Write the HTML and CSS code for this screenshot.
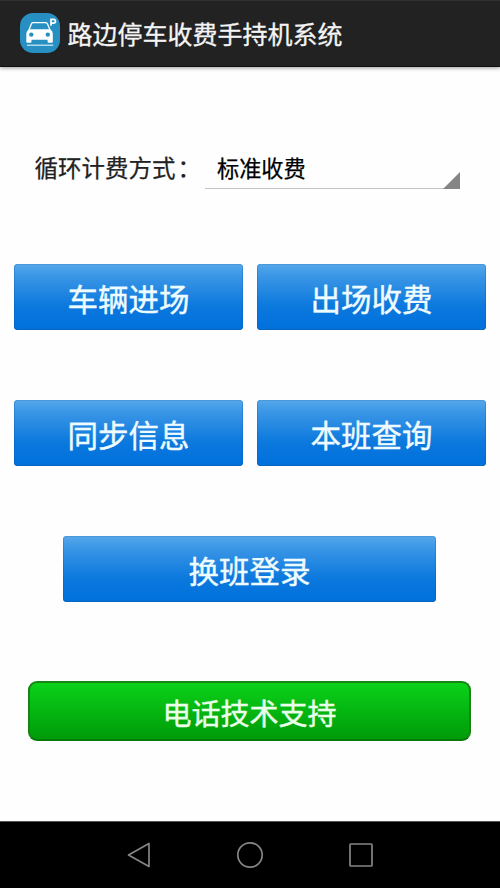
FILE: index.html
```html
<!DOCTYPE html>
<html lang="zh-CN">
<head>
<meta charset="utf-8">
<title>路边停车收费手持机系统</title>
<link rel="stylesheet" href="styles.css">
</head>
<body>
<header class="app-bar">
  <svg class="logo" viewBox="0 0 40 40" aria-hidden="true">
    <rect width="40" height="40" rx="13" fill="#278fc2"/>
    <path d="M9 17l2.400-6.300Q12 9.600 13.300 9.600h12.200q1.300 0 1.900 1.100L30 17" fill="none" stroke="#fff" stroke-width="1.300"/>
    <path fill="#fff" fill-rule="evenodd" d="M9 16.300h21.200q2.600 1.500 2.600 4.500v8q0 1-1 1h-3.200q-1 0-1-1v-2H11.500v2q0 1-1 1H7.300q-1 0-1-1v-8q0-3 2.700-4.500zM11.300 19.400a2.200 2.200 0 1 0 0 4.400 2.200 2.200 0 0 0 0-4.400zM27.800 19.400a2.200 2.200 0 1 0 0 4.400 2.200 2.200 0 0 0 0-4.400z"/>
    <path d="M7 32.200h26.300" stroke="#e4f5fb" stroke-width="1.100"/>
    <path d="M31 12.700V6.400h2.600a1.800 1.800 0 0 1 0 3.700H31" fill="none" stroke="#fff" stroke-width="1.700"/>
  </svg>
  <h1 class="title">路边停车收费手持机系统</h1>
</header>
<main class="content">
  <div class="mode">
    <span class="mode-label">循环计费方式<span class="colon">：</span></span>
    <div class="spinner">标准收费<svg class="spinner-mark" viewBox="0 0 17 17"><path d="M17 0v17H0z"/></svg></div>
  </div>
  <div class="row">
    <button class="btn">车辆进场</button>
    <button class="btn">出场收费</button>
  </div>
  <div class="row">
    <button class="btn">同步信息</button>
    <button class="btn">本班查询</button>
  </div>
  <button class="btn btn-wide">换班登录</button>
  <button class="support">电话技术支持</button>
</main>
<nav class="nav-bar">
  <svg class="nav-icon" viewBox="0 0 28 28"><path d="M3.500 14 24 2.500v23z"/></svg>
  <svg class="nav-icon" viewBox="0 0 28 28"><circle cx="14" cy="14" r="12.200"/></svg>
  <svg class="nav-icon" viewBox="0 0 28 28"><rect x="3" y="3" width="22" height="22" rx=".8"/></svg>
</nav>
</body>
</html>
```
FILE: styles.css
```css
* {
  box-sizing: border-box;
}

body {
  margin: 0;
  height: 888px;
  display: flex;
  flex-direction: column;
  background: #fefefe;
  font-family: "Noto Sans CJK SC", sans-serif;
  overflow: hidden;
}

.app-bar {
  height: 67px;
  flex: none;
  display: flex;
  align-items: center;
  padding: 0 0 1px 20px;
  gap: 7.500px;
  background: #222;
  border-top: 1px solid #303030;
  border-bottom: 1px solid #111;
  box-shadow: 0 1px 4px rgba(0, 0, 0, .4);
}

.logo {
  width: 40px;
  height: 40px;
}

.title {
  margin: 0;
  color: #f4f4f4;
  font-size: 25px;
  line-height: 36px;
  font-weight: 400;
  -webkit-text-stroke: .3px #f4f4f4;
  white-space: nowrap;
}

.content {
  flex: 1;
  display: flex;
  flex-direction: column;
  padding: 79px 14px 0;
}

.mode {
  height: 43px;
  margin-bottom: 75px;
  padding-left: 20.500px;
  display: flex;
}

.mode-label {
  width: 170.500px;
  flex: none;
  color: #222;
  font-size: 23.500px;
  line-height: 43px;
  -webkit-text-stroke: .25px #222;
  white-space: nowrap;
}

.colon {
  margin-left: 2px;
}

.spinner {
  position: relative;
  width: 255px;
  padding-left: 12px;
  border-bottom: 1px solid #c4c4c4;
  color: #000;
  font-size: 22.200px;
  line-height: 43px;
  -webkit-text-stroke: .25px #000;
}

.spinner-mark {
  position: absolute;
  right: 0;
  bottom: -1px;
  width: 17px;
  height: 17px;
  fill: #858585;
}

.row {
  display: grid;
  grid-template-columns: 1fr 1fr;
  gap: 14px;
  margin-bottom: 70px;
}

.btn {
  height: 66px;
  padding: 1px 0 0;
  border: 0;
  border-radius: 4px;
  background: linear-gradient(#57a8ec 0%, #3a96e6 18%, #0b78dd 65%, #0070dc 100%);
  box-shadow: inset 0 1px #4b99d8, inset 0 -1px #0867bd, inset 1px 0 rgba(0, 75, 155, .25), inset -1px 0 rgba(0, 75, 155, .25);
  color: #effcff;
  font-family: inherit;
  font-size: 30.500px;
  line-height: 44px;
  -webkit-text-stroke: .4px #effcff;
}

.btn-wide {
  width: 373px;
  margin-left: 49px;
}

.support {
  width: 443px;
  height: 60px;
  margin: 79px 0 0 14px;
  padding: 1px 0 0;
  border: 2px solid #178516;
  border-bottom-color: #087a08;
  border-radius: 9px;
  background: linear-gradient(#0bd21a, #05b911 45%, #009b09);
  color: #eaffea;
  font-family: inherit;
  font-size: 29px;
  line-height: 42px;
  -webkit-text-stroke: .4px #eaffea;
}

.nav-bar {
  height: 67px;
  flex: none;
  display: flex;
  justify-content: center;
  align-items: center;
  gap: 83px;
  background: #000;
  border-top: 1px solid #555;
}

.nav-icon {
  width: 28px;
  height: 28px;
  fill: none;
  stroke: #858585;
  stroke-width: 1.700;
  stroke-linejoin: round;
}
```
